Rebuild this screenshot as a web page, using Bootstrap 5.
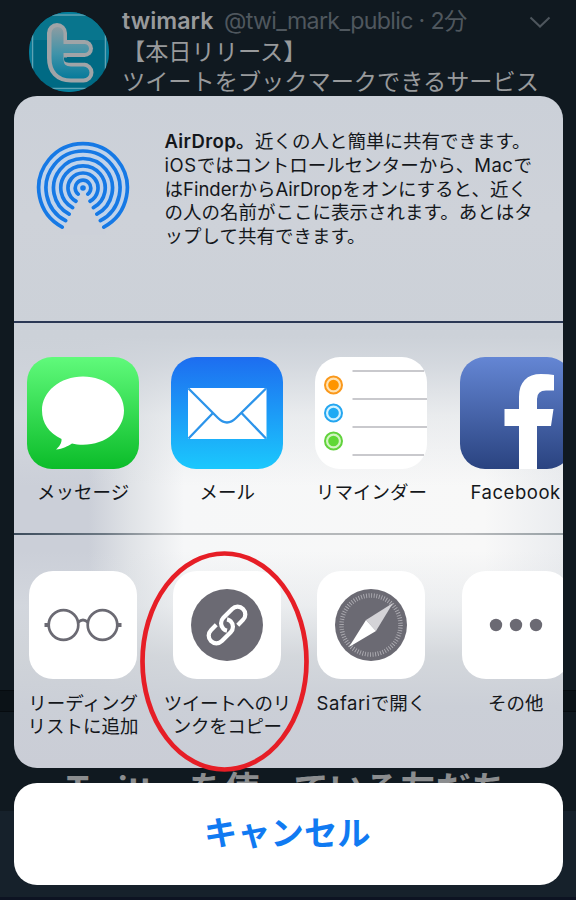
<!DOCTYPE html>
<html lang="ja">
<head>
<meta charset="utf-8">
<meta name="viewport" content="width=device-width, initial-scale=1">
<title>共有</title>
<link href="https://cdn.jsdelivr.net/npm/bootstrap@5.3.0/dist/css/bootstrap.min.css" rel="stylesheet">
<style>
body{width:576px;height:900px;font-family:Inter,"Noto Sans CJK JP",sans-serif;color:#14171b;
 background:linear-gradient(#101920 0 690px,#060b0f 690px 691px,#0b1217 691px 711px,#060b0f 711px 712px,#101920 712px 811px,#16212b 811px 897px,#0d1322 897px)}
.tweet{height:96px;padding:0 0 0 29px}
.avatar{margin-top:12px}
.tweet-body{margin-left:13px;padding-top:8px;font-size:23.2px;line-height:30.5px;color:#989a9c}
.tweet-text{padding-top:1.5px}
.tweet-head{height:27px;line-height:27px}
.user{font-weight:600;letter-spacing:.05px}
.handle{color:#4f575e;letter-spacing:-.66px;margin-left:10.5px}
.sheet{width:548.5px;height:672px;margin-left:14px;border-radius:23px;
 background:linear-gradient(#cbd0d8 0,#ced2d9 120px,#ccd1d8 240px,rgba(206,211,218,.86) 268px,rgba(220,224,228,.5) 320px,rgba(247,248,248,0) 390px,rgba(247,248,248,0) 455px,rgba(220,224,228,.45) 510px,rgba(208,212,217,.9) 560px,#cbcfd7 610px,#cacdd6 100%),
 linear-gradient(90deg,#cbcfd8 0 75px,#dfe2e6 115px,#f6f7f8 170px,#f8f8f8 470px,#eaecef 100%)}
.airdrop{height:225px;padding:34px 0 0 22px}
.airdrop svg{margin-top:11px}
.airdrop p{margin-left:34.5px;font-size:18.5px;line-height:23.8px}
.airdrop strong{font-weight:600;letter-spacing:.35px}
.wide{letter-spacing:.55px}
.divide{height:2px;background:#2b3855}
.divide-soft{background:linear-gradient(90deg,#3c4c5c 0,#6c7883 90px,#b0b4b7 150px,#b9bbbd 450px,#98a1a6)}
.strip{margin-left:-3px;width:580px}
.apps{height:210px;padding-top:34px}
.actions{height:233px;padding-top:36px}
.cell{width:144.2px;flex:none;font-size:18.5px;line-height:23.4px;text-align:center}
.apps span{margin-top:12px}
.actions span{margin-top:13px}
.tight{letter-spacing:-.35px}
.friends{height:15px;padding-left:66px;font-size:35.2px;line-height:42px;font-weight:700;letter-spacing:.35px;color:#8b8d8f}
.cancel{width:548.5px;height:102px;padding:0 2px 0 0;margin-left:14px;border-radius:23px;background:#fff;color:#107af2;font-size:33.3px;font-weight:700}
.ring{left:138px;top:549px}
</style>
<script src="https://cdn.jsdelivr.net/npm/bootstrap@5.3.0/dist/js/bootstrap.bundle.min.js"></script>
</head>
<body class="position-relative overflow-hidden">
<header class="tweet d-flex overflow-hidden">
 <svg class="avatar flex-shrink-0" width="80" height="80" viewBox="0 0 80 80">
  <defs><clipPath id="av"><circle cx="40" cy="40" r="40"/></clipPath><linearGradient id="tg" gradientUnits="userSpaceOnUse" x1="0" y1="12" x2="0" y2="66"><stop stop-color="#949da1"/><stop offset=".55" stop-color="#3f93a9"/><stop offset="1" stop-color="#087b9b"/></linearGradient></defs>
  <g clip-path="url(#av)"><rect width="80" height="80" fill="#006a84"/><rect width="80" height="28" fill="#08758d"/>
  <path d="M0 3H80M0 76.500H80M3.500 0V80M76.500 0V80" stroke="#5ea3b4" stroke-width="1.500"/>
  <path d="M0 0H80V2H0zM0 77.500H80V80H0zM0 0H2.500V80H0zM77.500 0H80V80H77.500z" fill="#067f9c"/></g>
  <path d="M28 21V46Q28 60.500 42 60.500H54.500" fill="none" stroke="#a0a4a7" stroke-width="20" stroke-linecap="round" stroke-linejoin="round"/>
  <path d="M28 36.500H55.500" stroke="#a0a4a7" stroke-width="17" stroke-linecap="round"/><path d="M30 36H35V54H44L35 58H28z" fill="#a0a4a7"/>
  <path d="M28.500 21V46Q28.500 60.500 42 60.500H54.500" fill="none" stroke="url(#tg)" stroke-width="12" stroke-linecap="round"/>
  <path d="M29 36.600L55.500 36.500" stroke="url(#tg)" stroke-width="9" stroke-linecap="round"/>
  <path d="M35 45.500H58L55 50.500H38Q35 50 35 47z" fill="#006a84"/>
 </svg>
 <div class="tweet-body flex-grow-1 text-nowrap">
  <div class="tweet-head d-flex"><span class="user">twimark</span><span class="handle">@twi_mark_public · 2分</span>
   <svg class="ms-auto me-4 mt-1" width="23" height="20" viewBox="0 0 23 20"><path d="M1.500 5.500L11 14.500L20.500 5.500" fill="none" stroke="#4e565d" stroke-width="2"/></svg></div>
  <div class="tweet-text">【本日リリース】<br>ツイートをブックマークできるサービス</div>
 </div>
</header>
<main class="sheet overflow-hidden">
 <section class="airdrop d-flex">
  <svg class="flex-shrink-0" width="94" height="94" viewBox="-47 -47 94 94" fill="none" stroke="#1679e5" stroke-width="3.700" stroke-linecap="round">
   <circle r="45" fill="#b9d4f4" stroke="none" opacity=".65"/><path d="M0 2L-23 45V49H23V45z" fill="#cdd1d9" stroke="none"/>
   <circle r="2.800" fill="#1679e5" stroke="none"/>
   <path id="arcs" d=""/>
  </svg>
  <p class="mb-0 text-nowrap"><strong>AirDrop。</strong>近くの人と簡単に共有できます。<br><span class="wide">iOS</span>ではコントロールセンターから、<span class="wide">Mac</span>で<br>はFinderからAirDropをオンにすると、近く<br>の人の名前がここに表示されます。あとはタ<br>ップして共有できます。</p>
 </section>
 <div class="divide"></div>
 <section class="strip apps d-flex">
  <div class="cell"><svg width="112" height="112" viewBox="0 0 112 112"><defs><linearGradient id="g1" x2="0" y2="1"><stop stop-color="#60fa7b"/><stop offset="1" stop-color="#0bbc29"/></linearGradient></defs><rect width="112" height="112" rx="25" fill="url(#g1)"/><path d="M56 19.500C33 19.500 15 34.500 15 53.500C15 66 22 76 34.500 82C35 86 32 90 29 92.500C36 92 41 89 45 86.500C48 87.300 52 87.800 56 87.800C79 87.800 97 72.500 97 53.500S79 19.500 56 19.500z" fill="#fff"/></svg><span class="d-block">メッセージ</span></div>
  <div class="cell"><svg width="112" height="112" viewBox="0 0 112 112"><defs><linearGradient id="g2" x2="0" y2="1"><stop stop-color="#1d6df0"/><stop offset="1" stop-color="#1bc8fd"/></linearGradient></defs><rect width="112" height="112" rx="25" fill="url(#g2)"/><rect x="17" y="31" width="78.500" height="51" rx="1.500" fill="#fff"/><path d="M17.500 31.500L47 61Q56 70 65 61L95 31.500M17.500 81.500L41.500 56.500M95 81.500L71 56.500" fill="none" stroke="#2c94ea" stroke-width="2.300"/></svg><span class="d-block">メール</span></div>
  <div class="cell"><svg width="112" height="112" viewBox="0 0 112 112"><rect width="112" height="112" rx="25" fill="#fff"/><path d="M37.500 14H109M37.500 42H112M37.500 70H112M37.500 98H109" stroke="#c9c9cd" stroke-width="2"/><g stroke-width="2"><circle cx="18.500" cy="28" r="8.500" fill="#ffe2b2" stroke="#fa981b"/><circle cx="18.500" cy="56" r="8.500" fill="#d2f2ff" stroke="#24a6f0"/><circle cx="18.500" cy="84" r="8.500" fill="#d2f5c2" stroke="#61d23c"/></g><circle cx="18.500" cy="28" r="5.300" fill="#ff9500"/><circle cx="18.500" cy="56" r="5.300" fill="#1eaaf4"/><circle cx="18.500" cy="84" r="5.300" fill="#5fd835"/></svg><span class="d-block">リマインダー</span></div>
  <div class="cell"><svg width="112" height="112" viewBox="0 0 112 112"><defs><linearGradient id="g4" x2="0" y2="1"><stop stop-color="#6486d4"/><stop offset="1" stop-color="#2a4380"/></linearGradient></defs><rect width="112" height="112" rx="25" fill="url(#g4)"/><path d="M59 112V69H44.500V52H59V40C59 25 67 17 81 17Q89 17 94 18V33.500H86Q77 33.500 77 42V52H93.500L91 69H77V112z" fill="#fff"/></svg><span class="d-block wide">Facebook</span></div>
 </section>
 <div class="divide divide-soft"></div>
 <section class="strip actions d-flex">
  <div class="cell"><svg width="108" height="108" viewBox="0 0 108 108"><rect width="108" height="108" rx="24" fill="#fff"/><g fill="none" stroke="#6b6a73" stroke-width="2.700"><circle cx="34.500" cy="54" r="14.800"/><circle cx="73.500" cy="54" r="14.800"/><path d="M49 51.500Q54 46.500 59 51.500"/><path d="M15.500 54H19.500M88.500 54H92.500" stroke-width="4"/></g></svg><span class="d-block">リーディング<br>リストに追加</span></div>
  <div class="cell"><svg width="108" height="108" viewBox="0 0 108 108"><rect width="108" height="108" rx="24" fill="#fff"/><circle cx="54" cy="54" r="36" fill="#6b6a73"/><g transform="translate(54 54) rotate(-45)" fill="none" stroke="#fff" stroke-width="4.200"><path d="M7.500 7.700H15A7.700 7.700 0 0 0 15 -7.700H2.500A7.700 7.700 0 0 0 -5.200 0Q-5.200 2.200 -4 4"/><path d="M-7.500 -7.700H-15A7.700 7.700 0 0 0 -15 7.700H-2.500A7.700 7.700 0 0 0 5.200 0Q5.200 -2.200 4 -4"/></g></svg><span class="d-block tight">ツイートへのリ<br>ンクをコピー</span></div>
  <div class="cell"><svg width="108" height="108" viewBox="0 0 108 108"><rect width="108" height="108" rx="24" fill="#fff"/><circle cx="54" cy="54" r="36" fill="#6b6a73"/><circle cx="54" cy="54" r="29.500" fill="none" stroke="#aeadb3" stroke-width="4.500" stroke-dasharray=".9 1.674"/><path d="M76 32L59 60L49 49z" fill="#d4d3d7"/><path d="M32 76L49 49L59 60z" fill="#fff"/></svg><span class="d-block"><span class="wide">Safari</span>で開く</span></div>
  <div class="cell"><svg width="108" height="108" viewBox="0 0 108 108"><rect width="108" height="108" rx="24" fill="#fff"/><g fill="#6b6a73"><circle cx="34" cy="54" r="6.200"/><circle cx="54" cy="54" r="6.200"/><circle cx="74" cy="54" r="6.200"/></g></svg><span class="d-block">その他</span></div>
 </section>
</main>
<div class="friends overflow-hidden text-nowrap">Twitterを使っている友だち</div>
<button type="button" class="cancel d-flex align-items-center justify-content-center border-0">キャンセル</button>
<svg class="ring position-absolute" width="174" height="226" viewBox="0 0 174 226"><ellipse cx="86.500" cy="112.500" rx="82" ry="108" fill="none" stroke="#e61e26" stroke-width="4.700"/></svg>
<script>
// AirDrop rings: concentric arcs, open at the bottom
let d = "";
[7.8, 15, 22.2, 29.5, 37, 44.3].forEach(r => {
  const a = (r < 10 ? 38 : 28) * Math.PI / 180, x = r * Math.sin(a), y = r * Math.cos(a);
  d += `M${-x} ${y}A${r} ${r} 0 1 1 ${x} ${y}`;
});
document.getElementById("arcs").setAttribute("d", d);
</script>
</body>
</html>
